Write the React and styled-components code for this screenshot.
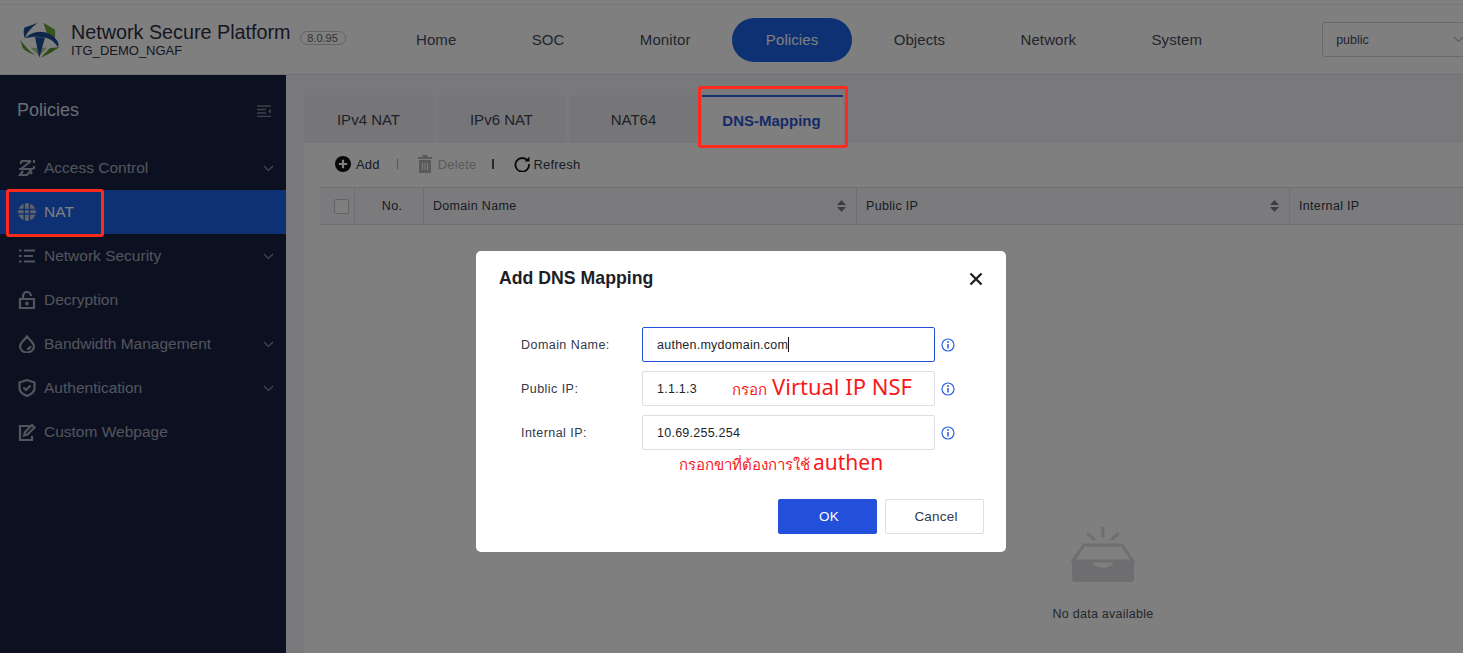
import React from "react";
import styled, { createGlobalStyle } from "styled-components";

const Global = createGlobalStyle`
  html, body { margin: 0; padding: 0; background: #fff; overflow: hidden; }
  * { box-sizing: border-box; }
  body { font-family: "Liberation Sans", Arial, sans-serif; }
`;

const Page = styled.div`
  position: relative;
  width: 1463px;
  height: 653px;
  overflow: hidden;
  padding-top: 4px;
  background: #fff;
  display: flex;
  flex-direction: column;
`;
const Header = styled.header`
  flex: 0 0 71px;
  display: flex;
  align-items: center;
  background: #fff;
  border-top: 1px solid #eee;
  border-bottom: 1px solid #dfe1e8;
`;
const Brand = styled.div`
  flex: 0 0 382px;
  display: flex;
  align-items: center;
  padding-left: 20px;
`;
const BrandText = styled.div`
  margin-left: 11px;
  display: flex;
  flex-direction: column;
  color: #2a2f44;
`;
const BrandTitle = styled.div`
  font-size: 19.75px;
  line-height: 23px;
  white-space: nowrap;
`;
const BrandSub = styled.div`
  font-size: 13px;
  line-height: 14px;
`;
const Version = styled.span`
  margin-left: 9px;
  margin-top: -4px;
  height: 14px;
  width: 46px;
  border: 1px solid #c4c6cc;
  border-radius: 7px;
  font-size: 11px;
  line-height: 12px;
  text-align: center;
  color: #666;
`;
const Nav = styled.nav`
  display: flex;
  gap: 7.3px;
  align-items: center;
`;
const NavItem = styled.div`
  height: 44px;
  line-height: 44px;
  padding: 0 34px;
  border-radius: 22px;
  font-size: 15px;
  letter-spacing: 0.1px;
  white-space: nowrap;
  color: ${(p) => (p.$active ? "#fff" : "#454a5c")};
  background: ${(p) => (p.$active ? "#1b62e4" : "transparent")};
`;
const Zone = styled.div`
  margin-left: 86px;
  flex: 0 0 160px;
  height: 35px;
  border: 1px solid #d0d2d8;
  border-radius: 3px;
  display: flex;
  align-items: center;
  padding-left: 13px;
  font-size: 12.5px;
  color: #454a5c;
  position: relative;
`;
const ZoneChevron = styled.svg`
  position: absolute;
  left: 130px;
  top: 13px;
`;
const Body = styled.div`
  flex: 1;
  display: flex;
  min-height: 0;
`;
const Sidebar = styled.aside`
  flex: 0 0 286px;
  background: #182244;
  display: flex;
  flex-direction: column;
`;
const SideHead = styled.div`
  height: 71px;
  display: flex;
  align-items: center;
  justify-content: space-between;
  padding: 0 15px 0 17px;
  font-size: 18px;
  color: #d4d8e4;
`;
const SideItem = styled.div`
  height: 44px;
  display: flex;
  align-items: center;
  padding: 0 12px 0 18px;
  font-size: 15.5px;
  color: ${(p) => (p.$active ? "#fff" : "#a6aab8")};
  background: ${(p) => (p.$active ? "#1b62e4" : "transparent")};
`;
const SideLabel = styled.span`
  margin-left: 8px;
  padding-bottom: 1px;
  flex: 1;
`;
const Main = styled.main`
  flex: 1;
  min-width: 0;
  background: #f2f3f7;
  padding: 20px 0 0 18px;
  display: flex;
  flex-direction: column;
`;
const Tabs = styled.div`
  display: flex;
  gap: 5px;
  height: 48px;
`;
const Tab = styled.div`
  width: ${(p) => p.$w}px;
  height: 48px;
  display: flex;
  align-items: center;
  justify-content: center;
  font-size: 15px;
  padding-right: ${(p) => (p.$active ? 2 : 0)}px;
  background: ${(p) => (p.$active ? "#fff" : "#ecedf1")};
  color: ${(p) => (p.$active ? "#2f55d0" : "#3f4352")};
  font-weight: ${(p) => (p.$active ? "bold" : "normal")};
  border-top: ${(p) => (p.$active ? "2px solid #2f62e0" : "none")};
`;
const Panel = styled.section`
  flex: 1;
  background: #fff;
  padding: 0 0 0 16px;
  overflow: hidden;
`;
const Toolbar = styled.div`
  height: 44px;
  display: flex;
  align-items: center;
  padding: 0 0 2px 15px;
  font-size: 13px;
  color: #33384a;
`;
const ToolBtn = styled.div`
  display: flex;
  align-items: center;
  gap: ${(p) => p.$gap || 5}px;
  letter-spacing: 0.2px;
  color: ${(p) => (p.$off ? "#b2b4b9" : "#33384a")};
`;
const ToolSep = styled.i`
  display: block;
  width: ${(p) => (p.$dark ? 2 : 1)}px;
  height: 10px;
  background: ${(p) => (p.$dark ? "#555" : "#aaa")};
  margin: 0 ${(p) => p.$r}px 0 ${(p) => p.$l}px;
`;
const Table = styled.div`
  width: 1566px;
`;
const THead = styled.div`
  height: 38px;
  display: grid;
  grid-template-columns: 34px 69px 433px 433px 1fr;
  background: #f6f7fa;
  border-top: 1px solid #dfe1e8;
  border-bottom: 1px solid #dfe1e8;
  font-size: 12.5px;
  color: #33384a;
`;
const TCell = styled.div`
  display: flex;
  align-items: center;
  justify-content: ${(p) => (p.$center ? "center" : "space-between")};
  padding: ${(p) => (p.$center ? `0 0 0 ${p.$pad}px` : "0 10px 0 9px")};
  letter-spacing: 0.32px;
  border-left: ${(p) => (p.$first ? "none" : "1px solid #dfe1e8")};
`;
const Check = styled.span`
  width: 15px;
  height: 15px;
  background: #fff;
  border: 1px solid #c4c6cc;
  border-radius: 2px;
`;
const Empty = styled.div`
  padding-top: 302px;
  display: flex;
  flex-direction: column;
  align-items: center;
  font-size: 12.5px;
  color: #4a4e5c;
`;
const EmptyText = styled.div`
  margin-top: 24px;
  letter-spacing: 0.25px;
`;
const Overlay = styled.div`
  position: absolute;
  inset: 0;
  background: rgba(0, 0, 0, 0.5);
`;
const Modal = styled.div`
  position: absolute;
  left: 476px;
  top: 251px;
  width: 530px;
  height: 301px;
  background: #fff;
  border-radius: 5px;
  padding: 0 22px 0 23px;
  display: flex;
  flex-direction: column;
`;
const ModalHead = styled.div`
  height: 54px;
  padding-top: 1px;
  display: flex;
  align-items: center;
  justify-content: space-between;
  font-size: 17.7px;
  font-weight: bold;
  color: #1c1e26;
`;
const Form = styled.div`
  margin-top: 22px;
  display: flex;
  flex-direction: column;
  gap: 9px;
`;
const Row = styled.div`
  display: flex;
  align-items: center;
  height: 35px;
  padding-left: 22px;
  position: relative;
`;
const Label = styled.div`
  width: 121px;
  font-size: 12.5px;
  letter-spacing: 0.45px;
  color: #33384a;
`;
const Field = styled.div`
  width: 293px;
  height: 35px;
  padding-left: 14px;
  display: flex;
  align-items: center;
  font-size: 12.5px;
  letter-spacing: 0.25px;
  color: #22252e;
  border-radius: 2px;
  border: 1px solid ${(p) => (p.$focus ? "#2350da" : "#dcdee3")};
`;
const Caret = styled.i`
  width: 1px;
  height: 15px;
  background: #111;
`;
const Info = styled.svg`
  margin-left: 6px;
`;
const Note = styled.div`
  position: absolute;
  left: ${(p) => p.$x}px;
  top: ${(p) => p.$y}px;
  display: flex;
  align-items: baseline;
  gap: ${(p) => p.$gap}px;
  white-space: nowrap;
  color: #f8181c;
  font-family: "Noto Sans", "Open Sans", sans-serif;
`;
const NoteThai = styled.span`
  font-size: 15px;
`;
const NoteBig = styled.span`
  font-size: ${(p) => p.$size}px;
`;
const Buttons = styled.div`
  margin-top: auto;
  margin-bottom: 18px;
  display: flex;
  justify-content: flex-end;
  gap: 8px;
`;
const Btn = styled.div`
  width: 99px;
  height: 35px;
  border-radius: 2px;
  display: flex;
  align-items: center;
  justify-content: center;
  font-size: 13.5px;
  letter-spacing: 0.2px;
  padding-left: 3px;
  background: ${(p) => (p.$primary ? "#2350da" : "#fff")};
  color: ${(p) => (p.$primary ? "#fff" : "#33384a")};
  border: 1px solid ${(p) => (p.$primary ? "#2350da" : "#dcdee3")};
`;
const Callout = styled.div`
  position: absolute;
  left: ${(p) => p.$x}px;
  top: ${(p) => p.$y}px;
  width: ${(p) => p.$w}px;
  height: ${(p) => p.$h}px;
  border: 3px solid #ff2a1c;
  border-radius: 3px;
`;

const Logo = () => (
  <svg width="40" height="40" viewBox="0 0 40 40">
    <path d="M23.300 2.800L35 9.500C35.500 14 35 18 34.300 21C32 17 29 14 26.700 12.800Z" fill="#6fa63c" />
    <path d="M0 19.500C4 25 9 31 15 35C9 33 5 31 2.700 27.800Z" fill="#5f9a35" />
    <path d="M39.300 27.200C34 31 27 35 20.700 37.800L30 28Z" fill="#5f9a35" />
    <path d="M10.700 27.800H26.700L19.300 36Z" fill="#a9cf8b" />
    <path d="M18.300 2.800L4.500 7.500C3 11 3.500 15 5 18.500C7 12 12 7 18.300 2.800Z" fill="#1d4f96" />
    <path d="M5 18.500C9 14 14 11.800 20 11.800C28 11.800 35 16 38.300 22.800V27.800C35 22 30 18.500 25 17.500C19 16.300 11 16.500 5 18.500Z" fill="#1d4f96" />
    <path d="M15 17L19.300 37.800L25 17.500Z" fill="#1d4f96" />
  </svg>
);

const Ic = ({ children }) => (
  <svg width="18" height="18" viewBox="0 0 18 18" fill="none" stroke="#a6aab8" strokeWidth="2.200">
    {children}
  </svg>
);

const Chevron = ({ color = "#8b8f9d" }) => (
  <svg width="11" height="7" viewBox="0 0 11 7" fill="none" stroke={color} strokeWidth="1.200">
    <path d="M1 1l4.500 4.500L10 1" />
  </svg>
);

const icons = {
  access: (
    <Ic>
      <path d="M3 2h10M3 2v3M13 2L3 10M1 10h13L9 16H2l3-4M16 1v3M16 7v3M14 13l-1.500 2" />
    </Ic>
  ),
  nat: (
    <svg width="18" height="18" viewBox="0 0 18 18">
      <circle cx="9" cy="9" r="9" fill="#c4c8d2" />
      <path d="M0 6.600h18M0 11h18M6.300 0v18M11.500 0v18" stroke="#1b62e4" strokeWidth="1.500" fill="none" />
    </svg>
  ),
  security: (
    <Ic>
      <path d="M1 3.500h2.500M6 3.500h11M1 9h2.500M6 9h9M1 14.500h2.500M6 14.500h11" />
    </Ic>
  ),
  decrypt: (
    <Ic>
      <path d="M2 8h14v9H2zM5 8V5a4 4 0 0 1 8 0" />
      <circle cx="9" cy="12.500" r="0.800" />
    </Ic>
  ),
  bandwidth: (
    <Ic>
      <path d="M9 1.500C6 5.500 2 8 2 11.500a7 6 0 0 0 14 0C16 8 12 5.500 9 1.500z" />
      <path d="M12.500 11a3.500 3.500 0 0 1-3.500 3" />
    </Ic>
  ),
  auth: (
    <Ic>
      <path d="M9 1l7.500 2.500V9c0 4-3.500 6.500-7.500 8-4-1.500-7.500-4-7.500-8V3.500z" />
      <path d="M5.500 8.500l2.500 2.500 4.500-4.500" />
    </Ic>
  ),
  custom: (
    <Ic>
      <path d="M13 3H2v14h12v-4" />
      <path d="M6 12.500l1-3.500 7-7 2.500 2.500-7 7z" />
    </Ic>
  ),
};

const menu = [
  ["access", "Access Control", true],
  ["nat", "NAT", false, true],
  ["security", "Network Security", true],
  ["decrypt", "Decryption"],
  ["bandwidth", "Bandwidth Management", true],
  ["auth", "Authentication", true],
  ["custom", "Custom Webpage"],
];

const Sort = () => (
  <svg width="9" height="12" viewBox="0 0 9 12" fill="#7a7d88">
    <path d="M4.500 0L9 5H0zM4.500 12L0 7h9z" />
  </svg>
);

const InfoIcon = () => (
  <Info width="14" height="14" viewBox="0 0 14 14" fill="none">
    <circle cx="7" cy="7" r="6" stroke="#2f62e0" strokeWidth="1.200" />
    <path d="M7 6v4.500" stroke="#2f62e0" strokeWidth="1.600" />
    <circle cx="7" cy="4" r="1" fill="#2f62e0" />
  </Info>
);

export default function App() {
  return (
    <Page>
      <Global />
      <Header>
        <Brand>
          <Logo />
          <BrandText>
            <BrandTitle>Network Secure Platform</BrandTitle>
            <BrandSub>ITG_DEMO_NGAF</BrandSub>
          </BrandText>
          <Version>8.0.95</Version>
        </Brand>
        <Nav>
          {["Home", "SOC", "Monitor", "Policies", "Objects", "Network", "System"].map((n) => (
            <NavItem key={n} $active={n === "Policies"}>{n}</NavItem>
          ))}
        </Nav>
        <Zone>
          public
          <ZoneChevron width="11" height="7" viewBox="0 0 11 7" fill="none" stroke="#bbb" strokeWidth="1.200">
            <path d="M1 1l4.500 4.500L10 1" />
          </ZoneChevron>
        </Zone>
      </Header>
      <Body>
        <Sidebar>
          <SideHead>
            Policies
            <svg width="14" height="12" viewBox="0 0 14 12" fill="none" stroke="#7f8391" strokeWidth="1.300">
              <path d="M0 1h14M0 4.500h9M0 8h9M0 11.500h14" />
              <path d="M14 4l-3 2.200 3 2.200z" fill="#7f8391" stroke="none" />
            </svg>
          </SideHead>
          {menu.map(([k, label, more, active]) => (
            <SideItem key={k} $active={active}>
              {icons[k]}
              <SideLabel>{label}</SideLabel>
              {more && <Chevron />}
            </SideItem>
          ))}
        </Sidebar>
        <Main>
          <Tabs>
            <Tab $w={129}>IPv4 NAT</Tab>
            <Tab $w={127}>IPv6 NAT</Tab>
            <Tab $w={127}>NAT64</Tab>
            <Tab $w={141} $active>DNS-Mapping</Tab>
          </Tabs>
          <Panel>
            <Toolbar>
              <ToolBtn>
                <svg width="16" height="16" viewBox="0 0 16 16">
                  <circle cx="8" cy="8" r="8" fill="#111" />
                  <path d="M8 3.800v8.400M3.800 8h8.400" stroke="#fff" strokeWidth="2.200" />
                </svg>
                Add
              </ToolBtn>
              <ToolSep $l={17} $r={20} />
              <ToolBtn $off $gap={6}>
                <svg width="14" height="18" viewBox="0 0 14 18" fill="#b2b4b9">
                  <path d="M4.500 0h5v2H14v2H0V2h4.500zM1 5h12v13H1z" />
                  <path d="M4.500 8v7M7 8v7M9.500 8v7" stroke="#fff" strokeWidth="1" />
                </svg>
                Delete
              </ToolBtn>
              <ToolSep $dark $l={15} $r={20} />
              <ToolBtn $gap={4}>
                <svg width="16" height="16" viewBox="0 0 16 16" fill="none" stroke="#111" strokeWidth="1.800">
                  <path d="M13.500 4.500A6.800 6.800 0 1 0 15 8" />
                  <path d="M15.500 0.500v5h-5z" fill="#111" stroke="none" />
                </svg>
                Refresh
              </ToolBtn>
            </Toolbar>
            <Table>
              <THead>
                <TCell $center $first $pad={8}><Check /></TCell>
                <TCell $center $pad={6}>No.</TCell>
                <TCell>Domain Name<Sort /></TCell>
                <TCell>Public IP<Sort /></TCell>
                <TCell>Internal IP</TCell>
              </THead>
              <Empty>
                <svg width="64" height="56" viewBox="0 0 64 56" fill="none">
                  <path d="M17 7l6 5M32 1v8M47 7l-6 5" stroke="#dcdde2" strokeWidth="3" strokeLinecap="round" />
                  <path d="M13 18h38l11 16H2z" fill="none" stroke="#dcdde2" strokeWidth="3" />
                  <path d="M1 34h20c2 9 20 9 22 0h20v18a3 3 0 0 1-3 3H4a3 3 0 0 1-3-3z" fill="#dcdde2" />
                </svg>
                <EmptyText>No data available</EmptyText>
              </Empty>
            </Table>
          </Panel>
        </Main>
      </Body>
      <Overlay />
      <Callout $x={6} $y={189} $w={98} $h={48} />
      <Callout $x={698} $y={86} $w={150} $h={62} />
      <Modal>
        <ModalHead>
          Add DNS Mapping
          <svg width="14" height="14" viewBox="0 0 14 14" stroke="#1c1e26" strokeWidth="2.300" style={{ marginRight: 1 }}>
            <path d="M1.500 1.500l11 11M12.500 1.500l-11 11" />
          </svg>
        </ModalHead>
        <Form>
          <Row>
            <Label>Domain Name:</Label>
            <Field $focus>authen.mydomain.com<Caret /></Field>
            <InfoIcon />
          </Row>
          <Row>
            <Label>Public IP:</Label>
            <Field>1.1.1.3</Field>
            <InfoIcon />
            <Note $x={233} $y={0} $gap={5}>
              <NoteThai>กรอก</NoteThai>
              <NoteBig $size={22}>Virtual IP NSF</NoteBig>
            </Note>
          </Row>
          <Row>
            <Label>Internal IP:</Label>
            <Field>10.69.255.254</Field>
            <InfoIcon />
            <Note $x={180} $y={33} $gap={3}>
              <NoteThai>กรอกขาที่ต้องการใช้</NoteThai>
              <NoteBig $size={21}>authen</NoteBig>
            </Note>
          </Row>
        </Form>
        <Buttons>
          <Btn $primary>OK</Btn>
          <Btn>Cancel</Btn>
        </Buttons>
      </Modal>
    </Page>
  );
}
